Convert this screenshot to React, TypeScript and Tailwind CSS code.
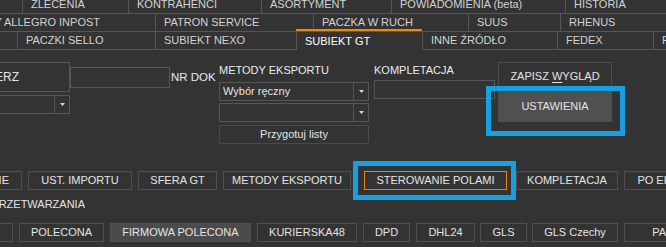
import React from 'react';

type Tab = { label: string; w: string; active?: boolean; clip?: boolean };

const row1: Tab[] = [
  { label: '', w: 'w-[23px]' },
  { label: 'ZLECENIA', w: 'w-[106px]' },
  { label: 'KONTRAHENCI', w: 'w-[133px]' },
  { label: 'ASORTYMENT', w: 'w-[130px]' },
  { label: 'POWIADOMIENIA (beta)', w: 'w-[174px]' },
  { label: 'HISTORIA', w: 'w-[120px]' },
];

const row2: Tab[] = [
  { label: 'DOSTAWY ALLEGRO INPOST', w: 'w-[156px]', clip: true },
  { label: 'PATRON SERVICE', w: 'w-[158px]' },
  { label: 'PACZKA W RUCH', w: 'w-[155px]' },
  { label: 'SUUS', w: 'w-[92px]' },
  { label: 'RHENUS', w: 'w-[120px]' },
];

const row3: Tab[] = [
  { label: '', w: 'w-[18px]' },
  { label: 'PACZKI SELLO', w: 'w-[138px]' },
  { label: 'SUBIEKT NEXO', w: 'w-[141px]' },
  { label: 'SUBIEKT GT', w: 'w-[126px]', active: true },
  { label: 'INNE ŹRÓDŁO', w: 'w-[135px]' },
  { label: 'FEDEX', w: 'w-[96px]' },
  { label: 'FURGONETKA', w: 'w-[110px]' },
];

function TabRow({ tabs }: { tabs: Tab[] }) {
  return (
    <div className="flex h-[18px]">
      {tabs.map((t, i) => (
        <div
          key={i}
          className={
            'relative h-full shrink-0 flex items-center whitespace-nowrap border-r border-[#565656] ' +
            t.w +
            (t.active ? ' text-white' : ' border-b') +
            (t.clip ? ' justify-end overflow-hidden pr-[55px]' : ' pl-[8px]')
          }
        >
          {t.active && <span className="absolute left-[-1px] right-0 top-[-3px] h-[2px] bg-[#f08a00]" />}
          {t.label}
        </div>
      ))}
    </div>
  );
}

function Arrow() {
  return (
    <div className="w-[15px] h-full border-l border-[#565656] flex items-center justify-center">
      <svg width="5" height="3" viewBox="0 0 5 3">
        <path d="M0 0h5L2.5 3z" fill="#d8d8d8" />
      </svg>
    </div>
  );
}

type Btn = { label: string; w: string; ml: string; active?: boolean; clip?: boolean; orange?: boolean };

const topButtons: Btn[] = [
  { label: 'POŁĄCZENIE', w: 'w-[22px]', ml: 'ml-0', clip: true },
  { label: 'UST. IMPORTU', w: 'w-[104px]', ml: 'ml-[6px]' },
  { label: 'SFERA GT', w: 'w-[79px]', ml: 'ml-[6px]' },
  { label: 'METODY EKSPORTU', w: 'w-[128px]', ml: 'ml-[6px]' },
  { label: 'STEROWANIE POLAMI', w: 'w-[143px]', ml: 'ml-[13px]', orange: true },
  { label: 'KOMPLETACJA', w: 'w-[102px]', ml: 'ml-[9px]' },
  { label: 'PO EKSPORCIE', w: 'w-[110px]', ml: 'ml-[6px]' },
];

const bottomButtons: Btn[] = [
  { label: 'EKONOMICZNA', w: 'w-[6px]', ml: 'ml-0', clip: true },
  { label: 'POLECONA', w: 'w-[85px]', ml: 'ml-[6px]' },
  { label: 'FIRMOWA POLECONA', w: 'w-[141px]', ml: 'ml-[6px]', active: true },
  { label: 'KURIERSKA48', w: 'w-[100px]', ml: 'ml-[6px]' },
  { label: 'DPD', w: 'w-[47px]', ml: 'ml-[6px]' },
  { label: 'DHL24', w: 'w-[59px]', ml: 'ml-[6px]' },
  { label: 'GLS', w: 'w-[47px]', ml: 'ml-[5px]' },
  { label: 'GLS Czechy', w: 'w-[86px]', ml: 'ml-[5px]' },
  { label: 'PAKETO', w: 'w-[100px]', ml: 'ml-[6px]' },
];

function ButtonRow({ items }: { items: Btn[] }) {
  return (
    <div className="flex h-[19px]">
      {items.map((b, i) => (
        <div
          key={i}
          className={
            'relative h-full shrink-0 flex items-center whitespace-nowrap border text-[#e4e4e4] ' +
            b.w +
            ' ' +
            b.ml +
            (b.orange ? ' border-[#e8830f]' : ' border-[#505050]') +
            (b.active ? ' bg-[#4b4b4b]' : '') +
            (b.clip ? ' border-l-0 justify-end overflow-hidden pr-[12px]' : ' justify-center')
          }
        >
          {b.orange && (
            <span className="absolute left-[-12px] top-[-11px] w-[163px] h-[39px] border-[5px] border-[#16a0e2]" />
          )}
          {b.label}
        </div>
      ))}
    </div>
  );
}

export default function App() {
  return (
    <div className="relative w-[666px] h-[247px] overflow-hidden bg-[#333333] text-[11px] leading-[13px] text-[#d2d2d2] font-['Liberation_Sans',Arial,sans-serif]">
      {/* Tabs */}
      <div className="-mt-[4px]">
        <TabRow tabs={row1} />
        <TabRow tabs={row2} />
        <TabRow tabs={row3} />
      </div>

      {/* Filters / actions */}
      <div className="flex items-start">
        <div className="w-[70px] shrink-0">
          <div className="mt-[12px] h-[30px] border border-l-0 border-[#565656] flex items-center justify-end overflow-hidden pr-[50px] whitespace-nowrap text-[12px] text-[#e4e4e4]">
            WYBIERZ
          </div>
          <div className="mt-[3px] h-[19px] border border-l-0 border-[#565656] flex justify-end">
            <Arrow />
          </div>
        </div>
        <div className="mt-[17px] w-[100px] shrink-0 h-[21px] border border-[#565656]" />
        <div className="mt-[17px] ml-[1px] w-[42px] shrink-0 h-[21px] flex items-center text-[11.5px] text-[#e8e8f0] whitespace-nowrap">
          NR DOK
        </div>

        <div className="ml-[6px] w-[150px] shrink-0">
          <div className="mt-[14px] text-[#e6ecf2]">METODY EKSPORTU</div>
          <div className="mt-[5px] h-[19px] border border-[#565656] flex items-center">
            <span className="flex-1 pl-[3px] text-[#e4e4e4]">Wybór ręczny</span>
            <Arrow />
          </div>
          <div className="mt-[2px] h-[19px] border border-[#565656] flex justify-end">
            <Arrow />
          </div>
          <div className="mt-[3px] h-[19px] border border-[#4a4a4a] rounded-[2px] flex items-center justify-center text-[#e4e4e4]">
            Przygotuj listy
          </div>
        </div>

        <div className="ml-[5px] w-[121px] shrink-0">
          <div className="mt-[14px] text-[#e6ecf2]">KOMPLETACJA</div>
          <div className="mt-[3px] h-[19px] border border-[#565656]" />
        </div>

        <div className="ml-[3px] w-[114px] shrink-0">
          <div className="mt-[12px] h-[27px] border border-b-0 border-[#4e4e4e] flex items-center justify-center text-[#e4e4e4] whitespace-nowrap">
            ZAPISZ&nbsp;<span className="underline underline-offset-2">W</span>YGLĄD
          </div>
          <div className="relative mt-[1px] h-[32px] bg-[#505050] flex items-center justify-center text-[#e4e4e4]">
            USTAWIENIA
            <span className="absolute left-[-12px] top-[-4px] w-[139px] h-[50px] border-[5px] border-[#16a0e2]" />
          </div>
        </div>
      </div>

      {/* Import / export controls */}
      <div className="mt-[27px]">
        <ButtonRow items={topButtons} />
      </div>
      <div className="mt-[8px] w-[85px] flex justify-end overflow-hidden whitespace-nowrap text-[#e4e4e4]">
        TRYB PRZETWARZANIA
      </div>
      <div className="mt-[12px]">
        <ButtonRow items={bottomButtons} />
      </div>
    </div>
  );
}
